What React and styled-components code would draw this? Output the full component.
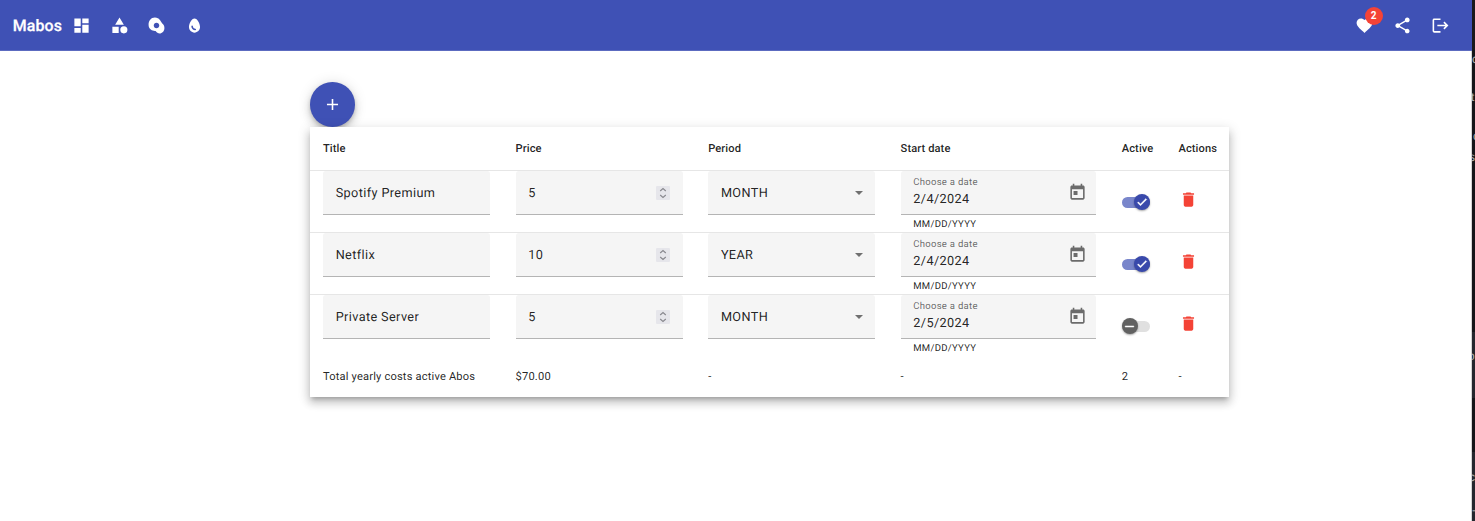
import React from "react";
import styled, { createGlobalStyle } from "styled-components";

const Global = createGlobalStyle`
  * { box-sizing: border-box; }
  body { margin: 0; background: #fff; overflow: hidden; text-rendering: geometricPrecision; }
`;

const Screen = styled.div`
  display: flex;
  width: 1475px;
  height: 521px;
  font-family: Roboto, "Liberation Sans", sans-serif;
  color: rgba(0, 0, 0, 0.87);
`;
const Page = styled.div`
  width: 1472px;
  flex: none;
  border-right: 1px solid #d5d5d5;
`;
const Toolbar = styled.header`
  display: flex;
  align-items: center;
  height: 51px;
  margin-right: -1px;
  padding: 1px 13px 0 12.7px;
  background: #3f51b5;
  border-bottom: 1px solid #5c6bc0;
  color: #fff;
`;
const Brand = styled.span`
  width: 49.5px;
  font-size: 15.9px;
  font-weight: 500;
  line-height: 25px;
  letter-spacing: 0.15px;
  -webkit-text-stroke: 0.25px currentColor;
  white-space: nowrap;
`;
const Spacer = styled.span`
  flex: 1;
`;
const IconButton = styled.button`
  position: relative;
  display: flex;
  align-items: center;
  justify-content: center;
  width: 37.9px;
  height: 38px;
  padding: 0;
  border: 0;
  background: none;
  color: ${(p) => p.$color || "inherit"};
`;
const Badge = styled.span`
  position: absolute;
  top: 0;
  left: 19.4px;
  width: 18px;
  height: 18px;
  border-radius: 50%;
  background: #f44336;
  color: #fff;
  font-family: Roboto, "Liberation Sans", sans-serif;
  font-size: 10px;
  font-weight: 700;
  line-height: 18px;
  text-align: center;
`;
const Glyph = styled.svg`
  display: block;
  width: ${(p) => p.$size || 19}px;
  height: ${(p) => p.$size || 19}px;
  fill: currentColor;
`;
const Content = styled.main`
  width: 919.2px;
  margin: 31.4px 0 0 310px;
`;
const Fab = styled.button`
  display: flex;
  align-items: center;
  justify-content: center;
  width: 44.5px;
  height: 44.5px;
  padding: 0;
  border: 0;
  border-radius: 50%;
  background: #3f51b5;
  color: #fff;
  box-shadow: 0 2.4px 4px -0.8px rgba(0, 0, 0, 0.2), 0 4.8px 8px rgba(0, 0, 0, 0.14), 0 0.8px 14px rgba(0, 0, 0, 0.12);
`;
const Card = styled.section`
  position: relative;
  height: 270px;
  background: #fff;
  box-shadow: 0 4px 4px -2.4px rgba(0, 0, 0, 0.2), 0 6.4px 8px 0.8px rgba(0, 0, 0, 0.14), 0 2.4px 11px 1.6px rgba(0, 0, 0, 0.12);
`;
const Row = styled.div`
  display: grid;
  grid-template-columns: 192.6px 192.6px 192.4px 221.2px 56.7px 63.7px;
  height: ${(p) => p.$height}px;
  align-items: ${(p) => p.$align || "center"};
  border-bottom: ${(p) => (p.$line ? "1px solid #e6e6e6" : "0")};
  font-size: 11.13px;
  font-weight: ${(p) => (p.$head ? 500 : 400)};
  letter-spacing: ${(p) => (p.$head ? 0.08 : 0.17)}px;
  white-space: nowrap;
`;
const Cell = styled.div`
  padding-left: 13px;
  padding-right: ${(p) => (p.$last ? 0 : 12.4)}px;
`;
const Field = styled.div`
  display: flex;
  align-items: center;
  justify-content: space-between;
  height: 44.5px;
  padding: 1px 12.7px 0;
  border-radius: 3px 3px 0 0;
  border-bottom: 1px solid #b4b4b4;
  background: #f5f5f5;
  font-size: 12.7px;
  letter-spacing: 0.38px;
`;
const DateText = styled.div`
  padding-bottom: 2px;
`;
const Label = styled.div`
  font-size: 9.54px;
  line-height: 14px;
  letter-spacing: 0.27px;
  color: rgba(0, 0, 0, 0.6);
`;
const Value = styled.div`
  line-height: 19px;
`;
const Hint = styled.div`
  padding: 1.4px 12.7px 0;
  font-size: 9.54px;
  line-height: 15px;
  letter-spacing: 0.28px;
`;
const Stepper = styled.span`
  display: flex;
  align-items: center;
  justify-content: center;
  width: 14px;
  height: 14px;
  margin-top: -1px;
  border-radius: 1px;
  background: #e6e6eb;
  color: #88888e;
`;
const Arrow = styled.span`
  margin-top: -1px;
  border: 4px solid transparent;
  border-top-color: #707070;
  border-bottom: 0;
`;
const DateIcon = styled.span`
  margin: -1px -3.5px 0 0;
  color: #6b6b6b;
`;
const Track = styled.span`
  display: flex;
  align-items: center;
  justify-content: ${(p) => (p.$on ? "flex-end" : "flex-start")};
  width: 28.6px;
  height: 11px;
  margin-top: 26px;
  margin-left: -0.1px;
  border-radius: 6px;
  background: ${(p) => (p.$on ? "#7986cb" : "#e0e0e0")};
`;
const Thumb = styled.span`
  display: flex;
  align-items: center;
  justify-content: center;
  flex: none;
  width: 16px;
  height: 16px;
  border-radius: 50%;
  background: ${(p) => (p.$on ? "#3949ab" : "#616161")};
  color: #fff;
  box-shadow: 0 1px 2px rgba(0, 0, 0, 0.35);
`;
const Delete = styled(IconButton)`
  width: 19px;
  height: 19px;
  margin: 18.8px 0 0 0.1px;
`;
const Neighbour = styled.aside`
  position: relative;
  flex: none;
  width: 3px;
  overflow: hidden;
  background: linear-gradient(#191a1c 0 50px, #15161a 50px 332px, #25272e 332px 398px, #15161a 398px 452px, #25272e 452px);
`;
const Fragment = styled.span`
  position: absolute;
  top: ${(p) => p.$top}px;
  left: ${(p) => p.$left}px;
  color: #b4b4b4;
  font: 12px/14px "Liberation Sans", sans-serif;
`;

const PATHS = {
  dashboard: "M3 13h8V3H3v10zm0 8h8v-6H3v6zm10 0h8V11h-8v10zm0-18v6h8V3h-8z",
  category: "M12 2l-5.5 9h11zM17.5 13a4.5 4.5 0 1 0 0 9 4.5 4.5 0 0 0 0-9zM3 13.5h8v8H3z",
  eggAlt: "M19 9c-2-2-3.01-7-9.03-7C4.95 2 1.94 6 2 11.52 2.06 17.04 6.96 19 9.97 19c2.01 0 2.01 3 6.02 3C19 22 22 19 22 15.02c0-3.01-1-4.01-3-6.02zm-7 6.5c-1.93 0-3.5-1.57-3.5-3.5S10.07 8.5 12 8.5s3.5 1.57 3.5 3.5-1.57 3.5-3.5 3.5z",
  egg: "M12 3C8.5 3 5 9.33 5 14c0 3.87 3.13 7 7 7s7-3.13 7-7c0-4.67-3.5-11-7-11zm1 15c-3 0-5-1.99-5-5 0-.55.45-1 1-1s1 .45 1 1c0 2.92 2.42 3 3 3 .55 0 1 .45 1 1s-.45 1-1 1z",
  favorite: "M12 21.35l-1.45-1.32C5.4 15.36 2 12.28 2 8.5 2 5.42 4.42 3 7.5 3c1.74 0 3.41.81 4.5 2.09C13.09 3.81 14.76 3 16.5 3 19.58 3 22 5.42 22 8.5c0 3.78-3.4 6.86-8.55 11.54L12 21.35z",
  share: "M18 16.08c-.76 0-1.44.3-1.96.77L8.91 12.7c.05-.23.09-.46.09-.7s-.04-.47-.09-.7l7.05-4.11c.54.5 1.25.81 2.04.81 1.66 0 3-1.34 3-3s-1.34-3-3-3-3 1.34-3 3c0 .24.04.47.09.7L8.04 9.81C7.5 9.31 6.79 9 6 9c-1.66 0-3 1.34-3 3s1.34 3 3 3c.79 0 1.5-.31 2.04-.81l7.12 4.16c-.05.21-.08.43-.08.65 0 1.61 1.31 2.92 2.92 2.92 1.61 0 2.92-1.31 2.92-2.92s-1.31-2.92-2.92-2.92z",
  logout: "M17 7l-1.41 1.41L18.17 11H8v2h10.17l-2.58 2.58L17 17l5-5zM4 5h8V3H4c-1.1 0-2 .9-2 2v14c0 1.1.9 2 2 2h8v-2H4V5z",
  add: "M19 13h-6v6h-2v-6H5v-2h6V5h2v6h6v2z",
  trash: "M6 19c0 1.1.9 2 2 2h8c1.1 0 2-.9 2-2V7H6v12zM19 4h-3.5l-1-1h-5l-1 1H5v2h14V4z",
  calendar: "M19 3h-1V1h-2v2H8V1H6v2H5c-1.11 0-1.99.9-1.99 2L3 19c0 1.1.89 2 2 2h14c1.1 0 2-.9 2-2V5c0-1.1-.9-2-2-2zm0 16H5V8h14v11zM7 10h5v5H7z",
  check: "M19.69 5.23L8.96 15.96l-4.23-4.23L2.96 13.5l6 6L21.46 7z",
  minus: "M20 13H4v-2h16v2z",
};
const Icon = ({ name, size }) => (
  <Glyph viewBox="0 0 24 24" $size={size}>
    <path d={PATHS[name]} stroke={name === "minus" || name === "check" ? "currentColor" : "none"} strokeWidth="0.8" />
  </Glyph>
);

const HEADERS = ["Title", "Price", "Period", "Start date", "Active", "Actions"];
const TOTALS = ["Total yearly costs active Abos", "$70.00", "-", "-", "2", "-"];
const SUBSCRIPTIONS = [
  { title: "Spotify Premium", price: 5, period: "MONTH", date: "2/4/2024", active: true },
  { title: "Netflix", price: 10, period: "YEAR", date: "2/4/2024", active: true },
  { title: "Private Server", price: 5, period: "MONTH", date: "2/5/2024", active: false },
];
const FRAGMENTS = [["c", 52, 0], ["t", 90, -1], ["c", 129, 1], ["s", 150, -3], ["o", 349, -4], ["c", 470, -3], ["-", 503, 0]];

function Subscription({ item, last }) {
  return (
    <Row $height={last ? 61.4 : 62} $align="start" $line={!last}>
      <Cell><Field>{item.title}</Field></Cell>
      <Cell>
        <Field>
          {item.price}
          <Stepper>
            <svg width="8" height="12" viewBox="0 0 8 12" fill="none" stroke="currentColor" strokeWidth="1.1">
              <path d="M1.2 4 4 1.5 6.8 4M1.2 8 4 10.5 6.8 8" />
            </svg>
          </Stepper>
        </Field>
      </Cell>
      <Cell><Field>{item.period}<Arrow /></Field></Cell>
      <Cell>
        <Field>
          <DateText>
            <Label>Choose a date</Label>
            <Value>{item.date}</Value>
          </DateText>
          <DateIcon><Icon name="calendar" /></DateIcon>
        </Field>
        <Hint>MM/DD/YYYY</Hint>
      </Cell>
      <Cell>
        <Track $on={item.active}>
          <Thumb $on={item.active}><Icon name={item.active ? "check" : "minus"} size={item.active ? 12 : 13} /></Thumb>
        </Track>
      </Cell>
      <Cell $last><Delete $color="#f44336"><Icon name="trash" /></Delete></Cell>
    </Row>
  );
}

export default function App() {
  return (
    <Screen>
      <Global />
      <Page>
        <Toolbar>
          <Brand>Mabos</Brand>
          {["dashboard", "category", "eggAlt", "egg"].map((n) => (
            <IconButton key={n}><Icon name={n} /></IconButton>
          ))}
          <Spacer />
          <IconButton><Icon name="favorite" /><Badge>2</Badge></IconButton>
          <IconButton><Icon name="share" /></IconButton>
          <IconButton><Icon name="logout" /></IconButton>
        </Toolbar>
        <Content>
          <Fab><Icon name="add" /></Fab>
          <Card>
            <Row $height={44} $line $head>
              {HEADERS.map((h) => <Cell key={h} $last>{h}</Cell>)}
            </Row>
            {SUBSCRIPTIONS.map((s, i) => <Subscription key={s.title} item={s} last={i === 2} />)}
            <Row $height={41}>
              {TOTALS.map((t, i) => <Cell key={i} $last>{t}</Cell>)}
            </Row>
          </Card>
        </Content>
      </Page>
      <Neighbour>
        {FRAGMENTS.map(([c, top, left]) => <Fragment key={top} $top={top} $left={left}>{c}</Fragment>)}
      </Neighbour>
    </Screen>
  );
}
